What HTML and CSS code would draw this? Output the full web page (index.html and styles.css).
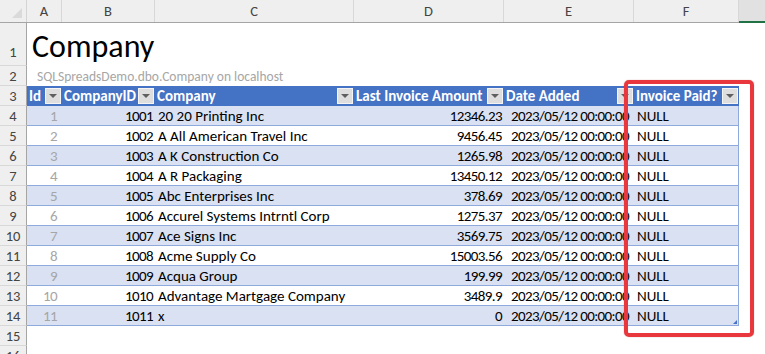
FILE: index.html
```html
<!DOCTYPE html>
<html lang="en">
<head>
    <meta charset="UTF-8">
    <title>Company - SQLSpreads</title>
    <link rel="stylesheet" href="styles.css">
</head>
<body>
    <div class="sheet">
        <div class="row col-heads">
            <div class="corner">
                <svg width="11" height="11" viewBox="0 0 11 11"><polygon points="10,0 10,10 0,10" fill="#dadada"/></svg>
            </div>
            <div class="col-head">A</div>
            <div class="col-head">B</div>
            <div class="col-head">C</div>
            <div class="col-head">D</div>
            <div class="col-head">E</div>
            <div class="col-head">F</div>
            <div class="col-head selected"></div>
        </div>

        <div class="row title-row">
            <div class="row-num">1</div>
            <div class="title">Company</div>
        </div>
        <div class="row">
            <div class="row-num">2</div>
            <div class="source">SQLSpreadsDemo.dbo.Company on localhost</div>
        </div>

        <div class="row">
            <div class="row-num">3</div>
            <div class="th">Id<span class="filter"></span></div>
            <div class="th">CompanyID<span class="filter"></span></div>
            <div class="th">Company<span class="filter"></span></div>
            <div class="th">Last Invoice Amount<span class="filter"></span></div>
            <div class="th">Date Added<span class="filter"></span></div>
            <div class="th last">Invoice Paid?<span class="filter"></span></div>
        </div>

        <div class="row band">
            <div class="row-num">4</div>
            <div class="td id">1</div><div class="td num">1001</div><div class="td">20 20 Printing Inc</div>
            <div class="td num">12346.23</div><div class="td date">2023/05/12 00:00:00</div><div class="td last">NULL</div>
        </div>
        <div class="row">
            <div class="row-num">5</div>
            <div class="td id">2</div><div class="td num">1002</div><div class="td">A All American Travel Inc</div>
            <div class="td num">9456.45</div><div class="td date">2023/05/12 00:00:00</div><div class="td last">NULL</div>
        </div>
        <div class="row band">
            <div class="row-num">6</div>
            <div class="td id">3</div><div class="td num">1003</div><div class="td">A K Construction Co</div>
            <div class="td num">1265.98</div><div class="td date">2023/05/12 00:00:00</div><div class="td last">NULL</div>
        </div>
        <div class="row">
            <div class="row-num">7</div>
            <div class="td id">4</div><div class="td num">1004</div><div class="td">A R Packaging</div>
            <div class="td num">13450.12</div><div class="td date">2023/05/12 00:00:00</div><div class="td last">NULL</div>
        </div>
        <div class="row band">
            <div class="row-num">8</div>
            <div class="td id">5</div><div class="td num">1005</div><div class="td">Abc Enterprises Inc</div>
            <div class="td num">378.69</div><div class="td date">2023/05/12 00:00:00</div><div class="td last">NULL</div>
        </div>
        <div class="row">
            <div class="row-num">9</div>
            <div class="td id">6</div><div class="td num">1006</div><div class="td">Accurel Systems Intrntl Corp</div>
            <div class="td num">1275.37</div><div class="td date">2023/05/12 00:00:00</div><div class="td last">NULL</div>
        </div>
        <div class="row band">
            <div class="row-num">10</div>
            <div class="td id">7</div><div class="td num">1007</div><div class="td">Ace Signs Inc</div>
            <div class="td num">3569.75</div><div class="td date">2023/05/12 00:00:00</div><div class="td last">NULL</div>
        </div>
        <div class="row">
            <div class="row-num">11</div>
            <div class="td id">8</div><div class="td num">1008</div><div class="td">Acme Supply Co</div>
            <div class="td num">15003.56</div><div class="td date">2023/05/12 00:00:00</div><div class="td last">NULL</div>
        </div>
        <div class="row band">
            <div class="row-num">12</div>
            <div class="td id">9</div><div class="td num">1009</div><div class="td">Acqua Group</div>
            <div class="td num">199.99</div><div class="td date">2023/05/12 00:00:00</div><div class="td last">NULL</div>
        </div>
        <div class="row">
            <div class="row-num">13</div>
            <div class="td id">10</div><div class="td num">1010</div><div class="td">Advantage Martgage Company</div>
            <div class="td num">3489.9</div><div class="td date">2023/05/12 00:00:00</div><div class="td last">NULL</div>
        </div>
        <div class="row band">
            <div class="row-num">14</div>
            <div class="td id">11</div><div class="td num">1011</div><div class="td">x</div>
            <div class="td num">0</div><div class="td date">2023/05/12 00:00:00</div><div class="td last">NULL<span class="resize"></span></div>
        </div>

        <div class="row">
            <div class="row-num">15</div>
        </div>
        <div class="row">
            <div class="row-num">16</div>
        </div>

        <div class="highlight"></div>
    </div>
</body>
</html>
```

FILE: styles.css
```css
* {
    margin: 0;
    padding: 0;
    box-sizing: border-box;
}
body {
    font-family: Carlito, Lato, "Liberation Sans", sans-serif;
    font-size: 15px;
    background: white;
    color: #000;
    overflow: hidden;
}
.sheet {
    position: relative;
    width: 765px;
    height: 354px;
    overflow: hidden;
}
.row {
    display: grid;
    grid-template-columns: 27px 35px 93px 199px 150px 130px 105px 1fr;
    height: 20px;
}
.col-heads {
    height: 23px;
    background: #efefef;
    border-bottom: 1px solid #a5a5a5;
}
.corner {
    display: flex;
    align-items: flex-end;
    justify-content: flex-end;
    padding: 0 3px 3px 0;
    border-right: 1px solid #d4d4d4;
}
.col-head {
    display: flex;
    align-items: center;
    justify-content: center;
    color: #444;
    font-size: 14.5px;
    border-right: 1px solid #d8d8d8;
}
.col-head.selected {
    background: #e1e1e1;
    border-right: none;
    border-bottom: 2px solid #217346;
    margin-bottom: -1px;
}
.row-num {
    display: flex;
    align-items: center;
    justify-content: center;
    background: #efefef;
    border-right: 1px solid #a5a5a5;
    border-bottom: 1px solid #d8d8d8;
    color: #444;
    font-size: 14.5px;
}
.title-row {
    height: 43px;
}
.title-row .row-num {
    align-items: flex-end;
    padding-bottom: 4px;
}
.title {
    grid-column: 2 / -1;
    font-size: 32px;
    line-height: 1;
    padding: 8px 0 0 5px;
    color: #000;
}
.source {
    grid-column: 2 / -1;
    color: #a6a6a6;
    font-size: 13.5px;
    padding: 2px 0 0 10px;
}
.th {
    display: flex;
    align-items: center;
    background: #4472c4;
    color: white;
    font-weight: bold;
    white-space: nowrap;
    padding-left: 2px;
    border-bottom: 1px solid #4472c4;
}
.filter {
    position: relative;
    margin-left: auto;
    margin-right: 1px;
    width: 16px;
    height: 16px;
    background: #dedede;
    border: 1px solid #f4f4f4;
}
.filter::after {
    content: "";
    position: absolute;
    left: 3px;
    top: 5px;
    border-left: 4px solid transparent;
    border-right: 4px solid transparent;
    border-top: 4px solid #5f5f5f;
}
.td {
    display: flex;
    align-items: center;
    white-space: nowrap;
    padding: 0 3px;
    border-bottom: 1px solid #8ea9db;
    background: white;
}
.band .td {
    background: #d9e1f2;
}
.td.last {
    position: relative;
    border-right: 1px solid #8ea9db;
}
.td.num {
    justify-content: flex-end;
    padding-right: 2px;
    letter-spacing: -0.6px;
}
.td.id {
    justify-content: flex-end;
    padding-right: 5px;
    color: #a6a6a6;
    letter-spacing: -0.6px;
}
.td.date {
    position: relative;
    z-index: 1;
    padding-left: 7px;
    letter-spacing: -0.6px;
}
.resize {
    position: absolute;
    right: 1px;
    bottom: 1px;
    width: 0;
    height: 0;
    border-left: 4px solid transparent;
    border-bottom: 4px solid #4472c4;
}
.highlight {
    position: absolute;
    z-index: 2;
    left: 624px;
    top: 80px;
    width: 130px;
    height: 257px;
    border: 4px solid #e8383e;
    border-radius: 5px;
    box-shadow: 0 0 1px rgba(120, 20, 20, 0.6);
}
```
